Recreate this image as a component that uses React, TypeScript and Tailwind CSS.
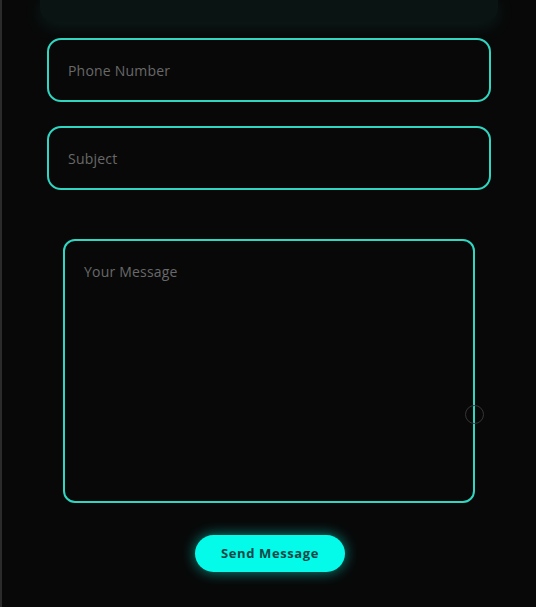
export default function App() {
  return (
    <div className="relative h-[607px] w-full overflow-hidden border-l-2 border-[#2b2b2b] bg-[#080808] font-['Open_Sans',sans-serif]">
      {/* tail of the glowing card above */}
      <div className="mx-[38px] h-[22px] rounded-b-[14px] bg-[#0a1413] shadow-[0_4px_18px_rgba(40,200,180,0.12)]" />

      <form className="flex flex-col">
        <div className="ml-[45px] mt-[16px] flex h-[64px] w-[444px] items-center rounded-[14px] border-2 border-[#31d6c1] px-[19px]">
          <span className="text-[14px] font-medium tracking-[0.2px] text-[#696969]">Phone Number</span>
        </div>
        <div className="ml-[45px] mt-[24px] flex h-[64px] w-[444px] items-center rounded-[14px] border-2 border-[#31d6c1] px-[19px]">
          <span className="text-[14px] font-medium tracking-[0.2px] text-[#696969]">Subject</span>
        </div>

        <div className="relative ml-[61px] mt-[49px] h-[264px] w-[412px] rounded-[12px] border-2 border-[#31d6c1] px-[19px] pt-[18px]">
          <span className="text-[14px] font-medium tracking-[0.2px] text-[#696969]">Your Message</span>
          <span className="absolute right-[-11px] top-[164px] h-[19px] w-[19px] rounded-full border-[1.5px] border-[#363636]" />
        </div>

        <div className="mt-[32px] flex justify-center pl-[2px]">
          <button
            type="button"
            className="h-[37px] w-[150px] rounded-full bg-[#05fbe9] text-[13px] font-bold tracking-[0.6px] text-[#0e4846] shadow-[0_0_14px_rgba(0,255,235,0.55)]"
          >
            Send Message
          </button>
        </div>
      </form>
    </div>
  );
}
